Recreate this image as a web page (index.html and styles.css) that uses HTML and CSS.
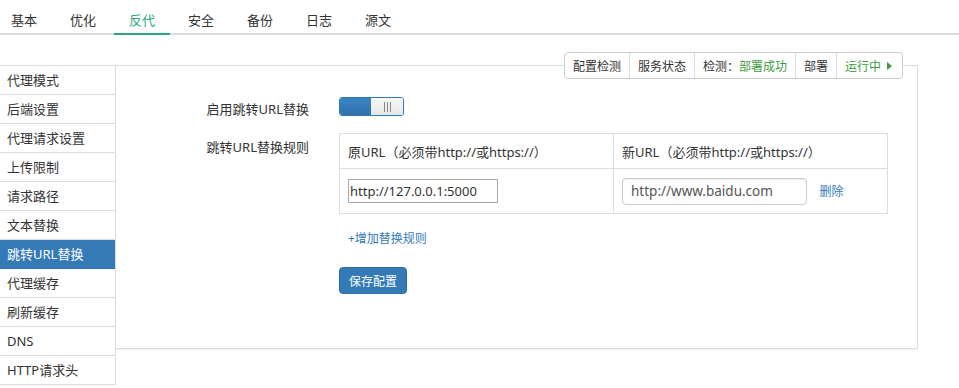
FILE: index.html
```html
<!DOCTYPE html>
<html lang="zh-CN">
<head>
  <meta charset="UTF-8">
  <title>反代 - 跳转URL替换</title>
  <link rel="stylesheet" href="styles.css">
</head>
<body>
  <ul class="tabs">
    <li class="tab">基本</li>
    <li class="tab">优化</li>
    <li class="tab active">反代</li>
    <li class="tab">安全</li>
    <li class="tab">备份</li>
    <li class="tab">日志</li>
    <li class="tab">源文</li>
  </ul>

  <div class="main">
    <ul class="side-menu">
      <li>代理模式</li>
      <li>后端设置</li>
      <li>代理请求设置</li>
      <li>上传限制</li>
      <li>请求路径</li>
      <li>文本替换</li>
      <li class="active">跳转URL替换</li>
      <li>代理缓存</li>
      <li>刷新缓存</li>
      <li>DNS</li>
      <li>HTTP请求头</li>
    </ul>

    <div class="panel">
      <div class="status-group">
        <span class="seg">配置检测</span>
        <span class="seg">服务状态</span>
        <span class="seg">检测：<em class="ok">部署成功</em></span>
        <span class="seg">部署</span>
        <span class="seg ok">运行中 <i class="play"></i></span>
      </div>

      <div class="form-row row-switch">
        <label class="form-label">启用跳转URL替换</label>
        <div class="switch">
          <span class="switch-on"></span>
          <span class="switch-handle"><i></i><i></i><i></i></span>
        </div>
      </div>

      <div class="form-row row-rules">
        <label class="form-label">跳转URL替换规则</label>
        <div class="rules">
          <table class="rule-table">
            <thead>
              <tr>
                <th>原URL（必须带http://或https://）</th>
                <th>新URL（必须带http://或https://）</th>
              </tr>
            </thead>
            <tbody>
              <tr>
                <td><input class="plain-input" type="text" value="http://127.0.0.1:5000"></td>
                <td>
                  <input class="form-control" type="text" value="http://www.baidu.com">
                  <a class="link del">删除</a>
                </td>
              </tr>
            </tbody>
          </table>
          <a class="link add-rule">+增加替换规则</a>
          <button class="btn-primary" type="button">保存配置</button>
        </div>
      </div>
    </div>
  </div>
</body>
</html>
```

FILE: styles.css
```css
* {
  box-sizing: border-box;
}

body {
  margin: 0;
  background: #fff;
  color: #333;
  font-family: "Noto Sans", "Noto Sans CJK SC", sans-serif;
  font-size: 13px;
}

ul {
  list-style: none;
  margin: 0;
  padding: 0;
}

/* top tabs */
.tabs {
  display: flex;
  gap: 3px;
  height: 35px;
  padding-left: 0;
  border-bottom: 2px solid #ddd;
}

.tabs .tab {
  padding: 11px 15px 4px;
  line-height: 18px;
  height: 35px;
  color: #333;
  cursor: pointer;
}

.tabs .tab:first-child {
  margin-left: -4px;
}

.tabs .tab.active {
  color: #26a97a;
  border-bottom: 2px solid #26a97a;
}

/* main area */
.main {
  display: flex;
  align-items: flex-start;
  margin-top: 30px;
}

.side-menu {
  width: 116px;
  border-top: 1px solid #ddd;
  border-right: 1px solid #ddd;
}

.side-menu li {
  height: 29px;
  line-height: 28px;
  padding-left: 7px;
  border-bottom: 1px solid #ddd;
  color: #333;
  cursor: pointer;
}

.side-menu li.active {
  background: #337ab7;
  border-bottom-color: #337ab7;
  color: #fff;
}

.panel {
  position: relative;
  width: 802px;
  height: 284px;
  border: 1px solid #ddd;
  border-left: none;
  box-shadow: 0 1px 1px rgba(0,0,0,0.05);
  padding-top: 31px;
}

/* status buttons sitting on the panel edge */
.status-group {
  position: absolute;
  top: -14px;
  right: 14px;
  display: flex;
  height: 27px;
  background: #fff;
  border: 1px solid #ccc;
  border-radius: 4px;
  font-size: 12px;
}

.status-group .seg {
  display: flex;
  align-items: center;
  padding: 0 8px;
  border-left: 1px solid #ddd;
  color: #333;
}

.status-group .seg:first-child {
  border-left: none;
}

.status-group em {
  font-style: normal;
}

.ok {
  color: #3d9c3d !important;
}

.play {
  display: inline-block;
  margin-left: 6px;
  margin-right: 2px;
  border-left: 5px solid #3d9c3d;
  border-top: 4px solid transparent;
  border-bottom: 4px solid transparent;
}

/* form */
.form-row {
  display: grid;
  grid-template-columns: 193px 1fr;
  column-gap: 30px;
}

.form-label {
  text-align: right;
  line-height: 20px;
}

.row-switch {
  height: 19px;
}

.row-switch .form-label {
  padding-top: 2px;
}

.row-rules {
  margin-top: 17px;
}

.row-rules .form-label {
  padding-top: 4px;
}

.switch {
  display: flex;
  width: 65px;
  height: 19px;
  border: 1px solid #337ab7;
  border-radius: 3px;
  overflow: hidden;
}

.switch-on {
  flex: 1;
  background: linear-gradient(#3a84c4, #2f72ad);
}

.switch-handle {
  width: 32px;
  display: flex;
  justify-content: center;
  align-items: center;
  gap: 2px;
  background: linear-gradient(#fafafa, #e6e6e6);
}

.switch-handle i {
  width: 1px;
  height: 10px;
  background: #888;
}

.rule-table {
  width: 549px;
  border-collapse: collapse;
}

.rule-table th,
.rule-table td {
  border: 1px solid #ddd;
  text-align: left;
  padding: 0 8px;
  width: 50%;
}

.rule-table th {
  height: 35px;
  font-weight: normal;
}

.rule-table td {
  height: 45px;
  vertical-align: middle;
}

.plain-input {
  width: 150px;
  height: 24px;
  border: 1px solid #a9a9a9;
  padding: 0 1px;
  font-family: inherit;
  font-size: 13px;
  color: #333;
  vertical-align: middle;
}

.form-control {
  width: 185px;
  height: 27px;
  border: 1px solid #ccc;
  border-radius: 4px;
  box-shadow: inset 0 1px 1px rgba(0,0,0,0.075);
  padding: 0 8px;
  font-family: inherit;
  font-size: 13.5px;
  color: #555;
  vertical-align: middle;
}

.link {
  color: #337ab7;
  cursor: pointer;
  font-size: 12px;
}

.del {
  margin-left: 9px;
  vertical-align: middle;
}

.add-rule {
  display: block;
  margin-top: 16px;
  margin-left: 9px;
  line-height: 18px;
}

.btn-primary {
  display: block;
  margin-top: 19px;
  height: 27px;
  padding: 0 9px;
  border: 1px solid #2e6da4;
  border-radius: 4px;
  background: #337ab7;
  color: #fff;
  font-family: inherit;
  font-size: 12px;
  cursor: pointer;
}
```
